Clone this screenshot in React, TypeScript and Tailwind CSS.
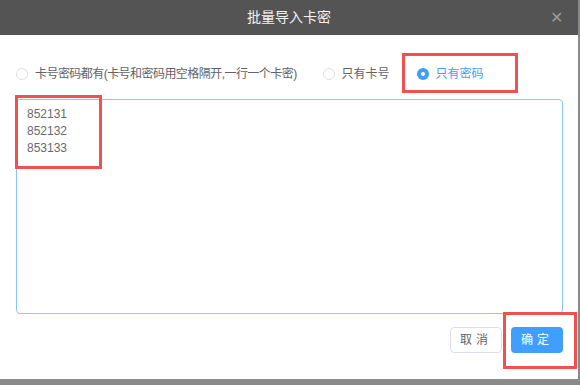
import { useState } from 'react';

const cjk = { fontFamily: '"Liberation Sans", "Noto Sans CJK SC", sans-serif' };

type Mode = 'both' | 'card' | 'pwd';

function Radio({
  checked,
  label,
  onClick,
  tight,
}: {
  checked: boolean;
  label: string;
  onClick: () => void;
  tight?: boolean;
}) {
  return (
    <label onClick={onClick} className="flex cursor-pointer items-center gap-[7px]">
      {checked ? (
        <span className="flex h-[12px] w-[12px] items-center justify-center rounded-full bg-[#409eff]">
          <span className="h-[4px] w-[4px] rounded-full bg-white" />
        </span>
      ) : (
        <span className="h-[12px] w-[12px] rounded-full border border-[#dcdfe6] bg-white" />
      )}
      <span
        className={
          (checked ? 'text-[#409eff] ' : 'text-[#606266] ') + (tight ? 'text-[12px] tracking-[-0.55px]' : 'text-[12px]')
        }
      >
        {label}
      </span>
    </label>
  );
}

export default function App() {
  const [mode, setMode] = useState<Mode>('pwd');

  return (
    <div className="h-[385px] w-[580px] overflow-hidden bg-[#8a8a8a]" style={cjk}>
      <div className="flex h-[379px] w-[578px] flex-col bg-white">
        {/* header */}
        <div className="relative flex h-[35px] shrink-0 items-center justify-center bg-[#545454]">
          <span className="text-[14px] text-[#f2f2f2]">批量导入卡密</span>
          <span className="absolute right-[15px] top-[10px] text-[16px] leading-none text-[#9a9a9a]">✕</span>
        </div>

        {/* options */}
        <div className="relative flex h-[64px] items-center pl-[16px] pt-[13px]">
          <Radio
            tight
            checked={mode === 'both'}
            label="卡号密码都有(卡号和密码用空格隔开,一行一个卡密)"
            onClick={() => setMode('both')}
          />
          <div className="ml-[26px]">
            <Radio checked={mode === 'card'} label="只有卡号" onClick={() => setMode('card')} />
          </div>
          <div className="ml-[27px]">
            <Radio checked={mode === 'pwd'} label="只有密码" onClick={() => setMode('pwd')} />
          </div>
          <div className="pointer-events-none absolute left-[402px] top-[18px] h-[40px] w-[116px] border-[3px] border-[#f0504f]" />
        </div>

        {/* textarea */}
        <div className="relative px-[16px]">
          <textarea
            defaultValue={'852131\n852132\n853133'}
            className="block h-[215px] w-[547px] resize-none rounded-[4px] border border-[#8cc5ff] px-[10px] pb-[5px] pt-[6px] text-[12px] leading-[17px] text-[#68696c] outline-none"
            style={{ fontFamily: '"Liberation Sans", sans-serif' }}
          />
          <div className="pointer-events-none absolute left-[15px] top-[-4px] h-[74px] w-[87px] border-[3px] border-[#f0504f]" />
        </div>

        {/* footer */}
        <div className="relative flex justify-end gap-[9px] pr-[15px] pt-[13px]">
          <button className="h-[26px] w-[52px] rounded-[4px] border border-[#dcdfe6] bg-white text-[12px] tracking-[4px] text-[#606266]">
            取消
          </button>
          <button className="h-[26px] w-[52px] rounded-[4px] bg-[#409eff] text-[12px] tracking-[4px] text-white">
            确定
          </button>
          <div className="pointer-events-none absolute left-[503px] top-[-2px] h-[57px] w-[74px] border-[3px] border-[#f0504f]" />
        </div>
      </div>
    </div>
  );
}
